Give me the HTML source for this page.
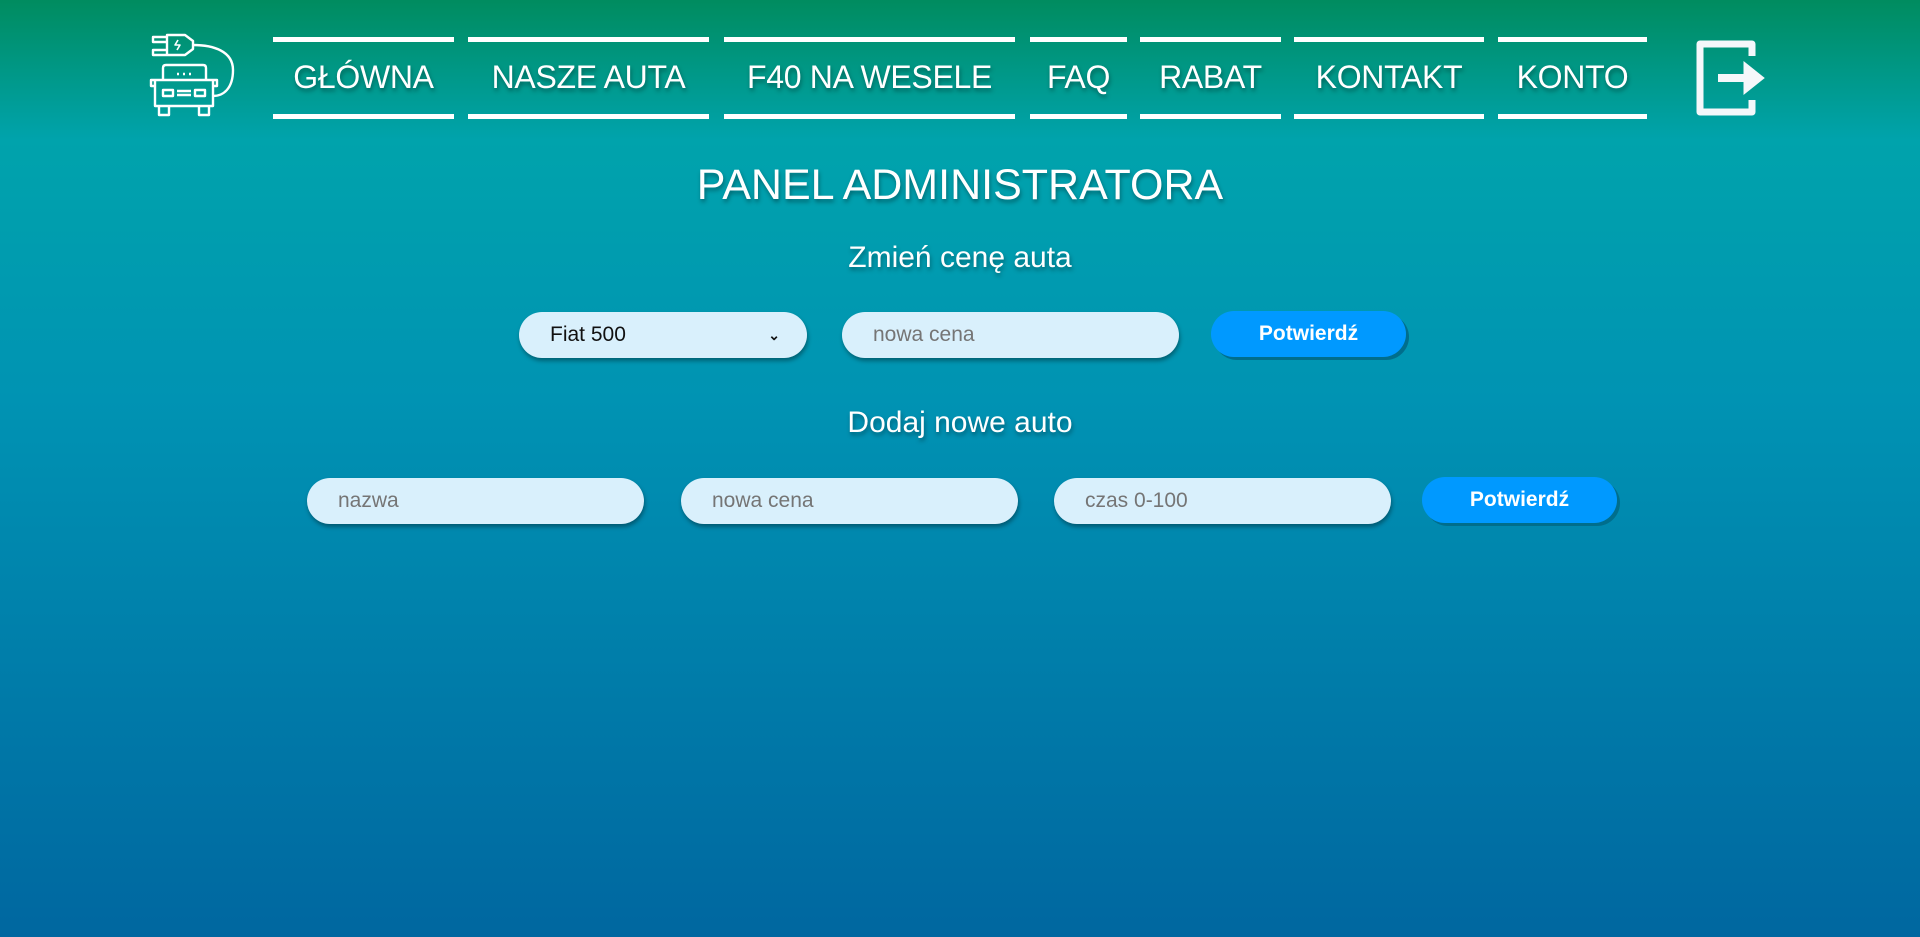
<!DOCTYPE html>
<html><head><meta charset="utf-8"><style>
*{margin:0;padding:0;box-sizing:border-box}
html,body{width:1920px;height:937px;overflow:hidden}
body{background:linear-gradient(180deg,#008c5f 0px,#00a3ac 140px,#0093b3 400px,#0067a0 937px);font-family:"Liberation Sans",sans-serif;color:#fff;position:relative}
.nav a{position:absolute;top:37px;height:82px;border-top:5px solid #fff;border-bottom:5px solid #fff;color:#fff;text-decoration:none;font-size:32px;line-height:70px;text-align:center;text-shadow:1px 3px 4px rgba(0,0,0,.35);letter-spacing:-.3px}
.t{position:absolute;left:0;width:1920px;text-align:center;text-shadow:1px 3px 4px rgba(0,0,0,.35)}
.f{position:absolute;height:46px;border-radius:23px;background:#d9f0fc;box-shadow:1px 3px 4px rgba(0,0,0,.35);font-size:21px;line-height:46px;padding-left:31px;color:#757575}
.b{position:absolute;height:46px;border-radius:23px;background:#0099ff;box-shadow:3px 3px 0 #006e8c;font-size:21px;font-weight:bold;line-height:46px;text-align:center;color:#fff}
</style></head><body>
<svg style="position:absolute;left:145px;top:28px" width="100" height="95" viewBox="0 0 100 95" fill="none" stroke="#fff" stroke-width="2.4" stroke-linejoin="round">
<path d="M22 9H8v5h14M22 22H8v5h14M22 7h18l8 6v8l-8 6H22z"/>
<path d="M33 12l-3 5h5l-3 5" stroke-width="1.6"/>
<path d="M48 17c20 0 40 6 40 25s-10 26-20 26"/>
<path d="M18 52V40q0-3 3-3h37q3 0 3 3v12M10 52h58v26H10zM10 52l-4 0v6h4M68 52h4v6h-4M14 78v9h10v-9M54 78v9h10v-9M18 62h10v6H18zM50 62h10v6H50zM32 63h14M32 67h14"/>
<path d="M32 46h2M38 46h2M44 46h2"/>
</svg>
<div class="nav">
<a style="left:273px;width:181px">GŁÓWNA</a>
<a style="left:468px;width:241px">NASZE AUTA</a>
<a style="left:724px;width:291px">F40 NA WESELE</a>
<a style="left:1030px;width:97px">FAQ</a>
<a style="left:1140px;width:141px">RABAT</a>
<a style="left:1294px;width:190px">KONTAKT</a>
<a style="left:1498px;width:149px">KONTO</a>
</div>
<svg style="position:absolute;left:1696px;top:40px" width="72" height="76" viewBox="0 0 72 76" fill="none" stroke="#f5f7fa" stroke-width="7">
<path d="M56 16V4H4v68h52v-12" stroke-linejoin="round"/>
<path d="M22 38h28" stroke-width="8"/>
<path d="M48 22l20 16-20 16z" fill="#f5f7fa" stroke-width="1"/>
</svg>
<div class="t" style="top:160px;font-size:43px;line-height:50px">PANEL ADMINISTRATORA</div>
<div class="t" style="top:241px;font-size:30px;line-height:34px">Zmień cenę auta</div>
<div class="f" style="left:519px;top:312px;width:288px;color:#111">Fiat 500<span style="position:absolute;right:27px;font-size:14px;font-weight:bold">&#8964;</span></div>
<div class="f" style="left:842px;top:312px;width:337px">nowa cena</div>
<div class="b" style="left:1211px;top:311px;width:195px">Potwierdź</div>
<div class="t" style="top:406px;font-size:30px;line-height:34px">Dodaj nowe auto</div>
<div class="f" style="left:307px;top:478px;width:337px">nazwa</div>
<div class="f" style="left:681px;top:478px;width:337px">nowa cena</div>
<div class="f" style="left:1054px;top:478px;width:337px">czas 0-100</div>
<div class="b" style="left:1422px;top:477px;width:195px">Potwierdź</div>
</body></html>
